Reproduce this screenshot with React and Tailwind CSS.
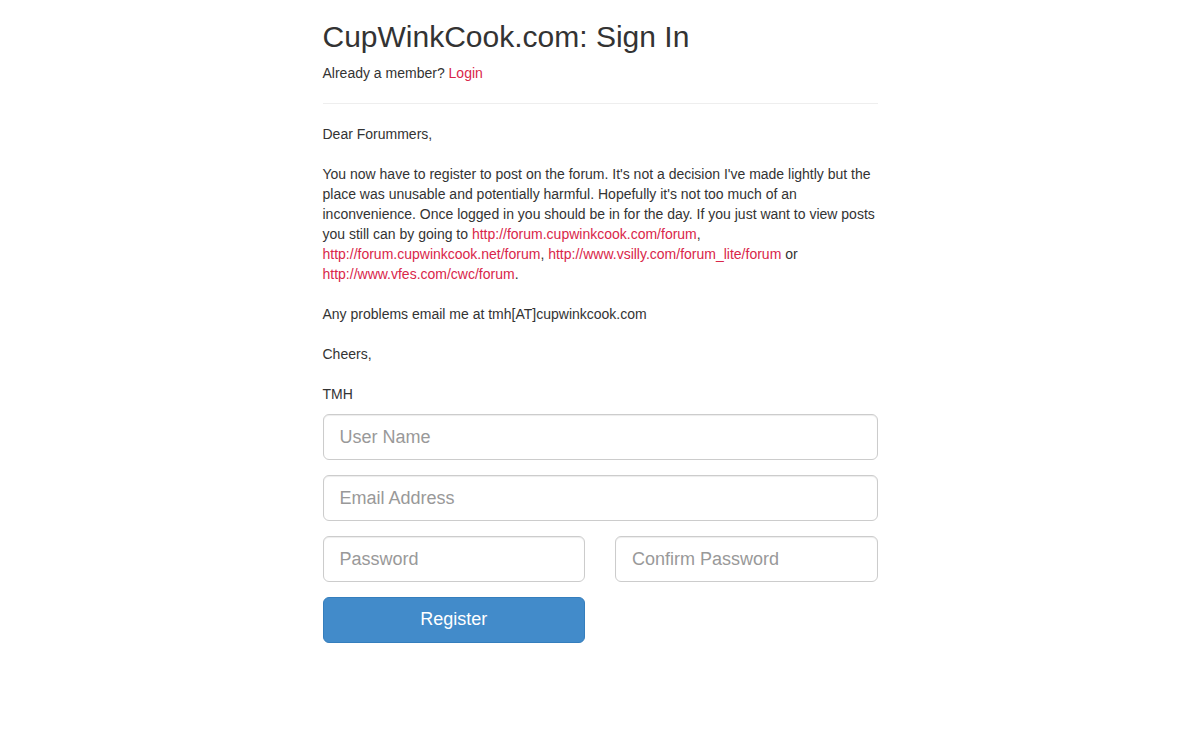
export default function App() {
  const link = "text-[#d9264a] no-underline";
  const input =
    "block w-full h-[46px] px-4 py-[10px] text-[18px] leading-[1.33] text-[#555] bg-white border border-[#ccc] rounded-[6px] placeholder:text-[#999] shadow-[inset_0_1px_1px_rgba(0,0,0,0.075)] outline-none";
  return (
    <div className="min-h-[740px] bg-white text-[#333] text-[14px] leading-[20px] font-['Liberation_Sans',Arial,sans-serif]">
      <div className="w-[555px] mx-auto">
        <h1 className="pt-[20px] mb-[10px] text-[30px] leading-[1.1] font-normal">
          CupWinkCook.com: Sign In
        </h1>
        <p className="mb-[20px]">
          Already a member? <a className={link} href="#">Login</a>
        </p>
        <hr className="border-0 border-t border-[#eee] mb-[20px]" />
        <p className="mb-[10px]">
          Dear Forummers,
          <br />
          <br />
          You now have to register to post on the forum. It's not a decision I've made lightly but the place was unusable and potentially harmful. Hopefully it's not too much of an inconvenience. Once logged in you should be in for the day. If you just want to view posts you still can by going to{" "}
          <a className={link} href="#">http://forum.cupwinkcook.com/forum</a>,{" "}
          <a className={link} href="#">http://forum.cupwinkcook.net/forum</a>,{" "}
          <a className={link} href="#">http://www.vsilly.com/forum_lite/forum</a> or{" "}
          <a className={link} href="#">http://www.vfes.com/cwc/forum</a>.
          <br />
          <br />
          Any problems email me at tmh[AT]cupwinkcook.com
          <br />
          <br />
          Cheers,
          <br />
          <br />
          TMH
        </p>
        <form className="flex flex-col gap-[15px]" onSubmit={(e) => e.preventDefault()}>
          <input className={input} type="text" placeholder="User Name" />
          <input className={input} type="email" placeholder="Email Address" />
          <div className="grid grid-cols-2 gap-[30px]">
            <input className={input} type="password" placeholder="Password" />
            <input className={input} type="password" placeholder="Confirm Password" />
          </div>
          <div className="grid grid-cols-2 gap-[30px]">
            <button
              type="submit"
              className="h-[46px] px-4 text-[18px] leading-[1.33] text-white bg-[#428bca] border border-[#357ebd] rounded-[6px]"
            >
              Register
            </button>
            <div />
          </div>
        </form>
      </div>
    </div>
  );
}
